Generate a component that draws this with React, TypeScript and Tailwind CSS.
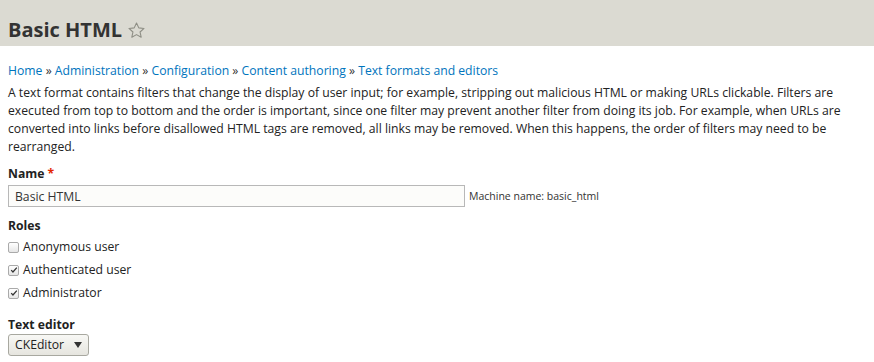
export default function App() {
  const roles = [
    { label: "Anonymous user", checked: false },
    { label: "Authenticated user", checked: true },
    { label: "Administrator", checked: true },
  ];

  return (
    <div className="min-h-[362px] bg-white text-[#333] text-[12.2px] leading-[18px] font-['Open_Sans',sans-serif]">
      {/* Page title bar */}
      <div className="h-[46px] bg-[#dbdad2] px-2 flex items-end pb-[3px]">
        <h1 className="text-[20px] leading-[26px] font-bold text-[#333] flex items-center">
          Basic HTML
          <svg className="ml-[5px] w-[19px] h-[19px]" viewBox="0 0 24 24" fill="none" stroke="#8e8e85" strokeWidth="1.4" strokeLinejoin="round">
            <path d="M12 2.5l2.9 6.2 6.6.7-5 4.5 1.4 6.6L12 17.2l-5.9 3.3 1.4-6.6-5-4.5 6.6-.7z" />
          </svg>
        </h1>
      </div>

      <div className="px-2 pt-[16px]">
        {/* Breadcrumb */}
        <nav className="text-[#0074bd]">
          <a>Home</a> <span className="text-[#333]">»</span> <a>Administration</a>{" "}
          <span className="text-[#333]">»</span> <a>Configuration</a>{" "}
          <span className="text-[#333]">»</span> <a>Content authoring</a>{" "}
          <span className="text-[#333]">»</span> <a>Text formats and editors</a>
        </nav>

        <p className="mt-[4px] text-[#222]">
          A text format contains filters that change the display of user input; for example, stripping out malicious HTML or making URLs clickable. Filters are executed from top to bottom and the order is important, since one filter may prevent another filter from doing its job. For example, when URLs are converted into links before disallowed HTML tags are removed, all links may be removed. When this happens, the order of filters may need to be rearranged.
        </p>

        {/* Name */}
        <div className="mt-[9px]">
          <label className="block font-bold text-[#222]">
            Name <span className="text-[#e32700]">*</span>
          </label>
          <div className="flex items-center mt-[2px]">
            <input
              readOnly
              value="Basic HTML"
              className="w-[457px] h-[22px] px-[6px] border border-[#b8b8b8] bg-[#fcfcfa] text-[12.2px] text-[#333] outline-none font-['Open_Sans',sans-serif]"
            />
            <span className="ml-[4px] text-[10.5px] text-[#333]">Machine name: basic_html</span>
          </div>
        </div>

        {/* Roles */}
        <div className="mt-[10px]">
          <div className="font-bold text-[#222]">Roles</div>
          <div className="mt-[3px] flex flex-col gap-[5px]">
            {roles.map((r) => (
              <label key={r.label} className="flex items-center text-[#222]">
                <span className="w-[11px] h-[11px] rounded-[2px] border border-[#aaa] bg-gradient-to-b from-[#fff] to-[#e6e6e6] flex items-center justify-center">
                  {r.checked && (
                    <svg viewBox="0 0 10 10" className="w-[8px] h-[8px]">
                      <path d="M1.5 5.2l2.2 2.3L8.5 2" fill="none" stroke="#333" strokeWidth="1.6" />
                    </svg>
                  )}
                </span>
                <span className="ml-[4px]">{r.label}</span>
              </label>
            ))}
          </div>
        </div>

        {/* Text editor */}
        <div className="mt-[14px]">
          <div className="font-bold text-[#222]">Text editor</div>
          <div className="inline-flex items-center h-[22px] w-[81px] px-[6px] border border-[#a8a8a0] rounded-[3px] bg-gradient-to-b from-[#f8f8f5] to-[#e6e5df] text-[#222]">
            <span className="flex-1">CKEditor</span>
            <svg viewBox="0 0 8 6" className="w-[8px] h-[6px]">
              <path d="M0 0h8L4 6z" fill="#333" />
            </svg>
          </div>
        </div>
      </div>
    </div>
  );
}
